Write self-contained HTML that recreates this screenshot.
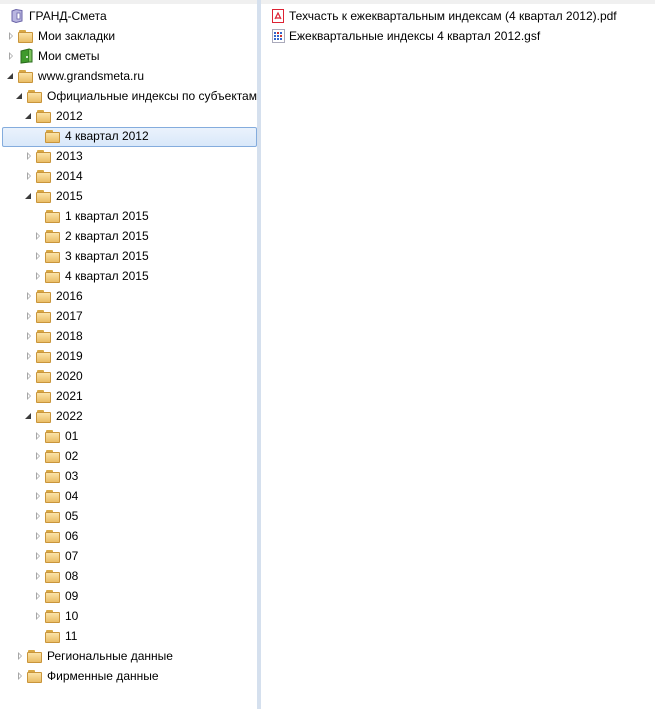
<!DOCTYPE html>
<html><head><meta charset="utf-8"><style>
html,body{margin:0;padding:0;width:655px;height:709px;background:#fff;overflow:hidden;font-family:"Liberation Sans","Noto Sans CJK SC",sans-serif;font-size:12px;color:#000}
.top{position:absolute;left:0;top:0;width:655px;height:4px;background:#f0f0f0}
.split{position:absolute;left:257px;top:0;width:4px;height:709px;background:#d5e0ee}
.row{position:absolute;height:20px;line-height:20px;white-space:nowrap}
.sel{position:absolute;left:2px;top:127px;width:253px;height:18px;border:1px solid #84acdd;border-radius:2px;background:linear-gradient(#eaf2fc,#d9e8fa)}
.f{position:absolute;width:16px;height:13px;top:4px}
.f:before{content:"";position:absolute;left:1px;top:0;width:7px;height:3px;background:#d9a945;border-radius:1px 1px 0 0}
.f:after{content:"";position:absolute;left:0;top:2px;width:15px;height:11px;background:linear-gradient(#fbe3a6,#e9bd66);border:1px solid #c9953b;box-sizing:border-box;border-radius:1px}
.ec{position:absolute;top:6px;width:0;height:0;border-top:4px solid transparent;border-bottom:4px solid transparent;border-left:4px solid #a6a6a6}
.ec:after{content:"";position:absolute;left:-3px;top:-2px;border-top:2px solid transparent;border-bottom:2px solid transparent;border-left:2px solid #fff}
.ex{position:absolute;top:7px;width:0;height:0;border-left:6px solid transparent;border-bottom:6px solid #3c3c3c}
.t{position:absolute;top:0}
</style></head><body>
<div class="top"></div>
<div class="split"></div>
<div class="sel"></div>
<div id="tree"></div>
<div class="row" style="left:272px;top:6px">
<svg style="position:absolute;left:0;top:3px" width="12" height="14"><rect x="0.5" y="0.5" width="11" height="13" fill="#fff" stroke="#d23"/><path d="M3 10 L6 4 L9 10 M4 9 L8 9" stroke="#d23" fill="none" stroke-width="1.2"/></svg>
<span style="position:absolute;left:17px">Техчасть к ежеквартальным индексам (4 квартал 2012).pdf</span></div>
<div class="row" style="left:272px;top:26px">
<svg style="position:absolute;left:0;top:3px" width="13" height="14"><rect x="0.5" y="0.5" width="12" height="13" fill="#fff" stroke="#aab"/><g fill="#36c"><rect x="2" y="3" width="2" height="2"/><rect x="5" y="3" width="2" height="2" fill="#c33"/><rect x="8" y="3" width="2" height="2"/><rect x="2" y="6" width="2" height="2"/><rect x="5" y="6" width="2" height="2"/><rect x="8" y="6" width="2" height="2" fill="#c33"/><rect x="2" y="9" width="2" height="2"/><rect x="5" y="9" width="2" height="2"/><rect x="8" y="9" width="2" height="2"/></g></svg>
<span style="position:absolute;left:17px">Ежеквартальные индексы 4 квартал 2012.gsf</span></div>
<script>
var rows=[
[0,'','g','ГРАНД-Смета'],[0,'c','f','Мои закладки'],[0,'c','b','Мои сметы'],[0,'e','f','www.grandsmeta.ru'],
[1,'e','f','Официальные индексы по субъектам'],[2,'e','f','2012'],[3,'','f','4 квартал 2012'],
[2,'c','f','2013'],[2,'c','f','2014'],[2,'e','f','2015'],[3,'','f','1 квартал 2015'],[3,'c','f','2 квартал 2015'],[3,'c','f','3 квартал 2015'],[3,'c','f','4 квартал 2015'],
[2,'c','f','2016'],[2,'c','f','2017'],[2,'c','f','2018'],[2,'c','f','2019'],[2,'c','f','2020'],[2,'c','f','2021'],[2,'e','f','2022'],
[3,'c','f','01'],[3,'c','f','02'],[3,'c','f','03'],[3,'c','f','04'],[3,'c','f','05'],[3,'c','f','06'],[3,'c','f','07'],[3,'c','f','08'],[3,'c','f','09'],[3,'c','f','10'],[3,'','f','11'],
[1,'c','f','Региональные данные'],[1,'c','f','Фирменные данные']];
var h='';
rows.forEach(function(r,i){
 var y=6+20*i, fx=18+9*r[0], s='';
 if(r[1]=='c') s+='<div class="ec" style="left:'+(fx-9)+'px"></div>';
 if(r[1]=='e') s+='<div class="ex" style="left:'+(fx-11)+'px"></div>';
 var tx=fx+20;
 if(r[2]=='f') s+='<div class="f" style="left:'+fx+'px"></div>';
 if(r[2]=='g'){ s+='<svg style="position:absolute;left:11px;top:3px" width="12" height="14"><path d="M1 2 L5 0.5 L11 1.5 L11 12 L5 13.5 L1 12 Z" fill="#b9b6e0" stroke="#6a64a8"/><rect x="6" y="4" width="3" height="6" fill="#fff" stroke="#6a64a8" stroke-width="0.8"/></svg>'; tx=29;}
 if(r[2]=='b') s+='<svg style="position:absolute;left:'+fx+'px;top:2px" width="16" height="16"><path d="M3 3 L11 1 L11 14 L3 15 Z" fill="#3f9a2c" stroke="#2a6b1d"/><path d="M11 1 L14 2 L14 14 L11 14" fill="#7cc35d" stroke="#2a6b1d"/><circle cx="9" cy="9" r="1" fill="#fff"/></svg>';
 h+='<div class="row" style="left:0;top:'+y+'px;width:255px">'+s+'<span class="t" style="left:'+tx+'px">'+r[3]+'</span></div>';
});
document.getElementById('tree').innerHTML=h;
</script>
</body></html>
